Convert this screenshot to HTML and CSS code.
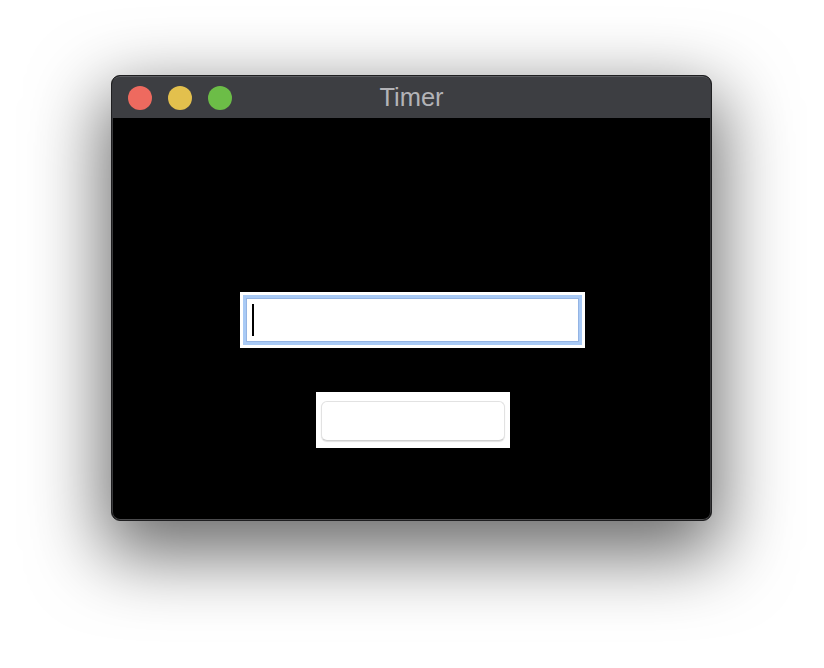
FILE: index.html
```html
<!DOCTYPE html>
<html>
<head>
<meta charset="utf-8">
<link rel="stylesheet" href="styles.css">
<title>Timer</title>
</head>
<body>
<div class="stage">
  <div class="window">
    <div class="titlebar">
      <div class="lights">
        <span class="light red"></span>
        <span class="light yellow"></span>
        <span class="light green"></span>
      </div>
      <div class="title">Timer</div>
    </div>
    <div class="content">
      <div class="field-wrap">
        <div class="field">
          <span class="caret"></span>
        </div>
      </div>
      <div class="button-wrap">
        <div class="button"></div>
      </div>
    </div>
  </div>
</div>
</body>
</html>
```

FILE: styles.css
```css
html, body {
  margin: 0;
  padding: 0;
  background: #ffffff;
}
body {
  width: 824px;
  height: 668px;
  overflow: hidden;
  font-family: "Liberation Sans", Arial, sans-serif;
}
.stage {
  padding: 75px 0 0 111px;
}
.window {
  width: 601px;
  height: 446px;
  box-sizing: border-box;
  border: 1px solid #1f1f21;
  border-radius: 9px;
  overflow: hidden;
  background: #000;
  display: flex;
  flex-direction: column;
  box-shadow: 0 26px 72px 8px rgba(0, 0, 0, 0.58);
}
.titlebar {
  height: 42px;
  flex: none;
  box-sizing: border-box;
  border-top: 1px solid #5c5d61;
  background: #3d3e42;
  display: grid;
  grid-template-columns: 1fr auto 1fr;
  align-items: center;
  border-radius: 8px 8px 0 0;
}
.lights {
  display: flex;
  gap: 16px;
  padding-left: 16px;
  grid-column: 1;
  grid-row: 1;
}
.light {
  width: 24px;
  height: 24px;
  border-radius: 50%;
  display: block;
}
.red { background: #ee6a5f; }
.yellow { background: #e3c04d; }
.green { background: #6cbd47; }
.title {
  grid-column: 2;
  grid-row: 1;
  color: #b3b3b7;
  font-size: 25.5px;
  line-height: 30px;
  padding-bottom: 1px;
}
.content {
  flex: 1;
  box-sizing: border-box;
  border-left: 1px solid #3a3a3c;
  border-right: 1px solid #3a3a3c;
  border-bottom: 1px solid #4a4a4c;
  border-radius: 0 0 8px 8px;
  display: flex;
  flex-direction: column;
  align-items: center;
  padding-top: 174px;
  padding-left: 2px;
  gap: 44px;
}
.field-wrap {
  width: 345px;
  height: 56px;
  box-sizing: border-box;
  background: #fff;
  padding: 3px;
}
.field {
  height: 100%;
  box-sizing: border-box;
  border: 3px solid #a9caf5;
  box-shadow: inset 0 0 0 1px #94b4e4;
  background: #fff;
  display: flex;
  align-items: center;
  padding-left: 6px;
}
.caret {
  display: block;
  width: 2px;
  height: 32px;
  background: #000;
}
.button-wrap {
  width: 194px;
  height: 56px;
  box-sizing: border-box;
  background: #fff;
  padding: 9px 5px 7px 5px;
}
.button {
  height: 100%;
  box-sizing: border-box;
  border: 1px solid #e2e2e2;
  border-bottom-color: #cfcfcf;
  border-radius: 6px;
  background: #fff;
  box-shadow: 0 1px 1px rgba(0, 0, 0, 0.12);
}
```
